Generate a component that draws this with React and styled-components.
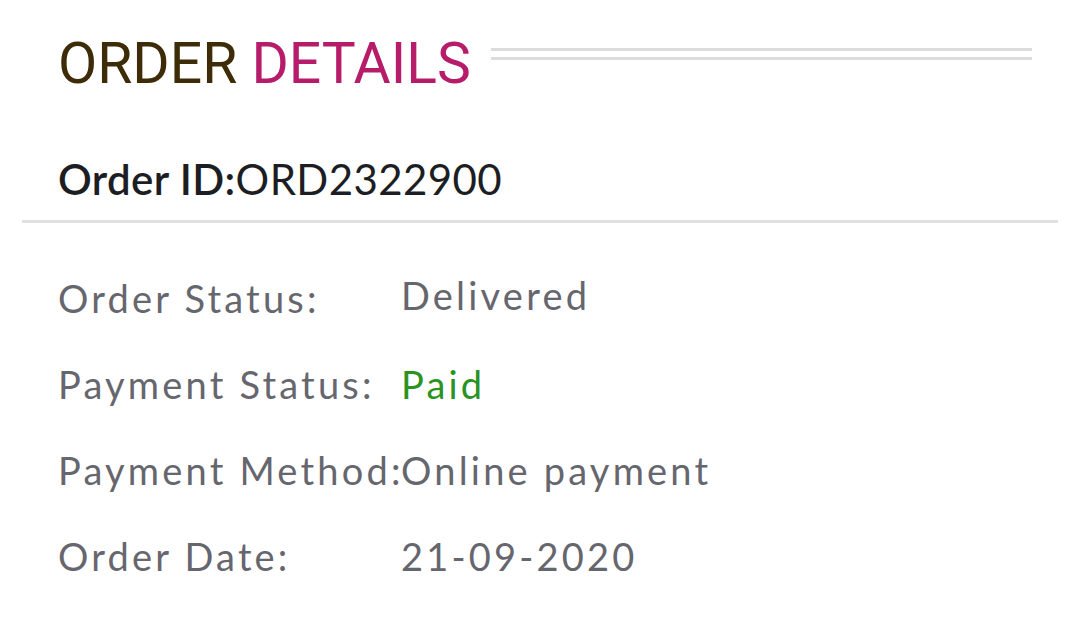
import React from "react";
import styled, { createGlobalStyle } from "styled-components";

const GlobalStyle = createGlobalStyle`
  html, body {
    margin: 0;
    padding: 0;
    background: #ffffff;
  }
  body {
    font-family: "Lato", "Liberation Sans", sans-serif;
  }
`;

const details = [
  { label: "Order Status:", value: "Delivered", raise: true },
  { label: "Payment Status:", value: "Paid", tone: "success" },
  { label: "Payment Method:", value: "Online payment" },
  { label: "Order Date:", value: "21-09-2020" },
  { label: "Grand Total:", value: "₹ 1,250.00" },
];

export default function App() {
  return (
    <Page>
      <GlobalStyle />
      <TitleBar>
        <Title>
          ORDER <Accent>DETAILS</Accent>
        </Title>
        <DoubleRule />
      </TitleBar>

      <OrderId>
        <strong>Order ID:</strong>ORD2322900
      </OrderId>
      <Divider />

      <InfoGrid>
        {details.map((item) => (
          <React.Fragment key={item.label}>
            <Label>{item.label}</Label>
            <Value $tone={item.tone} $raise={item.raise}>
              {item.value}
            </Value>
          </React.Fragment>
        ))}
      </InfoGrid>
    </Page>
  );
}

const Page = styled.div`
  padding-top: 32px;
  min-height: 622px;
`;

const TitleBar = styled.div`
  display: flex;
  align-items: flex-start;
  gap: 20px;
  padding: 0 48px 0 58px;
`;

const Title = styled.h1`
  margin: 0;
  font-family: "Roboto", "Liberation Sans", sans-serif;
  font-weight: 400;
  font-size: 57px;
  line-height: 64px;
  color: #3e2c08;
  white-space: nowrap;
`;

const Accent = styled.span`
  color: #b71c6b;
`;

const DoubleRule = styled.div`
  flex: 1;
  height: 6px;
  margin-top: 16px;
  border-top: 3px solid #dcdcdc;
  border-bottom: 3px solid #dcdcdc;
`;

const OrderId = styled.div`
  margin-top: 58px;
  padding-left: 58px;
  font-size: 42px;
  line-height: 50px;
  letter-spacing: 0.4px;
  color: #1c1e24;

  strong {
    font-weight: 600;
  }
`;

const Divider = styled.hr`
  margin: 16px 22px 0;
  border: none;
  height: 3px;
  background: #e0e0e0;
`;

const InfoGrid = styled.div`
  display: grid;
  grid-template-columns: 343px 1fr;
  row-gap: 41px;
  margin-top: 53px;
  padding-left: 58px;
  font-size: 38px;
  line-height: 45px;
  letter-spacing: 3.2px;
  color: #66666e;
`;

const Label = styled.div`
  white-space: nowrap;
`;

const Value = styled.div`
  white-space: nowrap;
  color: ${(p) => (p.$tone === "success" ? "#2b931f" : "#66666e")};
  margin-top: ${(p) => (p.$raise ? "-3px" : "0")};
`;
